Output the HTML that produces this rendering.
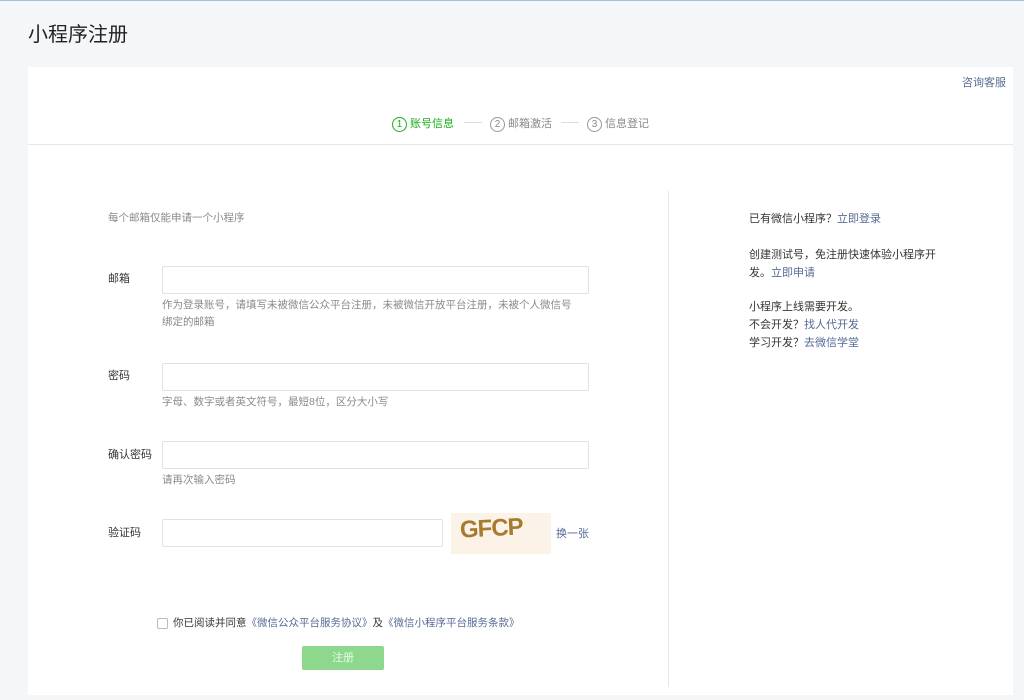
<!DOCTYPE html>
<html><head><meta charset="utf-8"><style>
body{margin:0;width:1024px;height:700px;background:#f5f6f7;font-family:"Liberation Sans","Noto Sans CJK SC",sans-serif;position:relative;overflow:hidden;border-top:1px solid #9cc3e0;box-sizing:border-box}
.a{position:absolute;white-space:nowrap}
.card{position:absolute;left:28px;top:66px;width:985px;height:628px;background:#fff}
.inp{position:absolute;height:26px;border:1px solid #e1e1e1;border-radius:2px;background:#fff;box-sizing:border-box}
.lab{font-size:11px;color:#333}
.tip{font-size:10.5px;color:#8a8a8a}
.lnk{color:#576b95}
.t{font-size:11px;color:#353535}
</style></head><body>
<div class="a" style="left:28px;top:17px;font-size:20px;color:#222">小程序注册</div>
<div class="card"></div>
<div class="a" style="left:962px;top:73px;font-size:11px" ><span class="lnk">咨询客服</span></div>
<div class="a" style="left:28px;top:143px;width:985px;height:1px;background:#e7e7e7"></div>
<div class="a" style="left:392px;top:114px;font-size:11px;color:#1aad19"><span style="display:inline-block;width:13px;height:13px;border:1px solid #1aad19;border-radius:50%;text-align:center;line-height:13px;font-size:10px;vertical-align:middle;margin-right:3px">1</span>账号信息</div>
<div class="a" style="left:464px;top:121px;width:18px;height:1px;background:#ddd"></div>
<div class="a" style="left:490px;top:114px;font-size:11px;color:#888"><span style="display:inline-block;width:13px;height:13px;border:1px solid #999;border-radius:50%;text-align:center;line-height:13px;font-size:10px;vertical-align:middle;margin-right:3px">2</span>邮箱激活</div>
<div class="a" style="left:561px;top:121px;width:18px;height:1px;background:#ddd"></div>
<div class="a" style="left:587px;top:114px;font-size:11px;color:#888"><span style="display:inline-block;width:13px;height:13px;border:1px solid #999;border-radius:50%;text-align:center;line-height:13px;font-size:10px;vertical-align:middle;margin-right:3px">3</span>信息登记</div>
<div class="a" style="left:668px;top:190px;width:1px;height:496px;background:#e7e7e7"></div>

<div class="a tip" style="left:108px;top:209px">每个邮箱仅能申请一个小程序</div>
<div class="a lab" style="left:108px;top:269px">邮箱</div>
<div class="inp" style="left:162px;top:265px;width:427px;height:28px"></div>
<div class="a tip" style="left:162px;top:296px;line-height:17px">作为登录账号，请填写未被微信公众平台注册，未被微信开放平台注册，未被个人微信号<br>绑定的邮箱</div>
<div class="a lab" style="left:108px;top:366px">密码</div>
<div class="inp" style="left:162px;top:362px;width:427px;height:28px"></div>
<div class="a tip" style="left:162px;top:393px">字母、数字或者英文符号，最短8位，区分大小写</div>
<div class="a lab" style="left:108px;top:445px">确认密码</div>
<div class="inp" style="left:162px;top:440px;width:427px;height:28px"></div>
<div class="a tip" style="left:162px;top:471px">请再次输入密码</div>
<div class="a lab" style="left:108px;top:523px">验证码</div>
<div class="inp" style="left:162px;top:518px;width:281px;height:28px"></div>
<div class="a" style="left:451px;top:512px;width:100px;height:41px;background:#fbf3e8"></div>
<div class="a" style="left:460px;top:514px;font-size:24px;font-weight:bold;color:#a87a30;font-family:'Liberation Sans',sans-serif;letter-spacing:-1px;transform:rotate(-3deg)">GFCP</div>
<div class="a" style="left:556px;top:524px;font-size:11px"><span class="lnk">换一张</span></div>
<div class="a" style="left:157px;top:617px;width:11px;height:11px;border:1px solid #bbb;border-radius:2px;box-sizing:border-box"></div>
<div class="a t" style="left:173px;top:614px;font-size:10.5px">你已阅读并同意<span class="lnk">《微信公众平台服务协议》</span>及<span class="lnk">《微信小程序平台服务条款》</span></div>
<div class="a" style="left:302px;top:645px;width:82px;height:24px;background:#8ed88d;border-radius:2px;color:#e8f8e8;font-size:11px;text-align:center;line-height:24px">注册</div>

<div class="a t" style="left:749px;top:209px">已有微信小程序？<span class="lnk">立即登录</span></div>
<div class="a t" style="left:749px;top:245px;line-height:18px">创建测试号，免注册快速体验小程序开<br>发。<span class="lnk">立即申请</span></div>
<div class="a t" style="left:749px;top:297px;line-height:18px">小程序上线需要开发。<br>不会开发？<span class="lnk">找人代开发</span><br>学习开发？<span class="lnk">去微信学堂</span></div>
</body></html>
